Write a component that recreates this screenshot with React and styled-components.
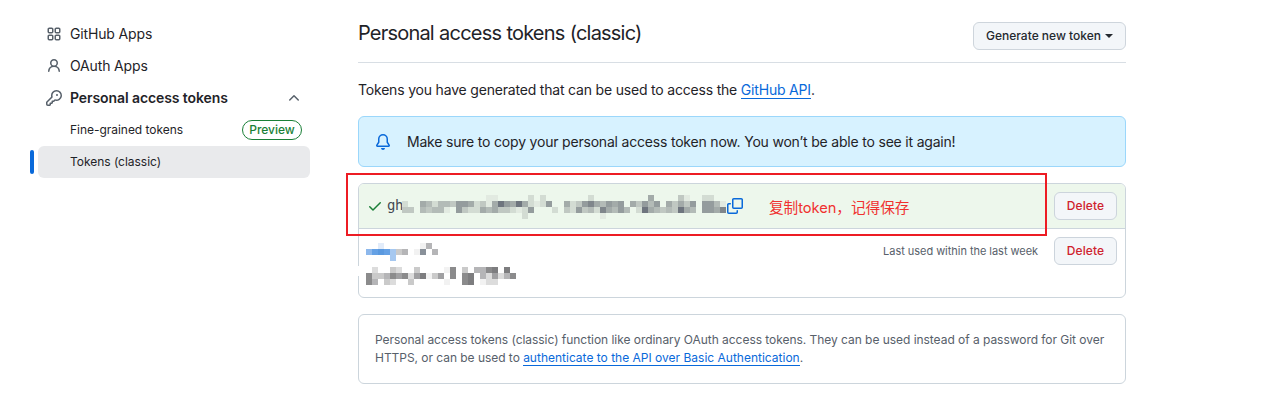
import React from "react";
import styled, { createGlobalStyle } from "styled-components";

const GlobalStyle = createGlobalStyle`
  * { box-sizing: border-box; }
  body {
    margin: 0;
    background: #fff;
    color: #1f2328;
    font-family: Inter, "Noto Sans CJK SC", sans-serif;
    font-size: 14px;
    line-height: 20px;
  }
`;

const Page = styled.div`
  display: flex;
  width: 1274px;
  height: 419px;
  overflow: hidden;
`;

const Sidebar = styled.nav`
  width: 310px;
  padding: 18px 0 0 38px;
  flex: none;
`;

const NavItem = styled.a`
  position: relative;
  display: flex;
  align-items: center;
  height: 32px;
  padding: 0 8px;
  border-radius: 6px;
  gap: 8px;
  white-space: nowrap;
  font-weight: ${(p) => (p.$bold ? 600 : 400)};
  letter-spacing: ${(p) => (p.$bold ? "-0.09px" : "-0.15px")};
`;

const SubItem = styled(NavItem)`
  padding-left: 32px;
  font-size: 12px;
  letter-spacing: -0.03px;
  background: ${(p) => (p.$active ? "#e9eaec" : "transparent")};

  &::before {
    content: "";
    display: ${(p) => (p.$active ? "block" : "none")};
    position: absolute;
    left: -8px;
    top: 4px;
    width: 4px;
    height: 24px;
    border-radius: 6px;
    background: #0969da;
  }
`;

const PreviewLabel = styled.span`
  margin-left: auto;
  width: 60px;
  height: 20px;
  border: 1px solid #1a7f37;
  border-radius: 20px;
  color: #1a7f37;
  font-size: 12px;
  font-weight: 500;
  line-height: 18px;
  text-align: center;
`;

const Glyph = styled.svg`
  display: block;
  flex: none;
  width: 16px;
  height: 16px;
  fill: ${(p) => p.$color || "#57606a"};
  margin-left: ${(p) => (p.$end ? "auto" : "0")};
`;

const Main = styled.main`
  width: 768px;
  margin-left: 48px;
  padding-top: 22px;
`;

const Header = styled.header`
  display: flex;
  justify-content: space-between;
  height: 41px;
  border-bottom: 1px solid #d8dee4;
`;

const Title = styled.h1`
  margin: 0;
  font-size: 20px;
  font-weight: 400;
  line-height: 22px;
  letter-spacing: -0.8px;
  word-spacing: 0.4px;
`;

const Button = styled.button`
  display: flex;
  align-items: center;
  justify-content: center;
  flex: none;
  width: ${(p) => (p.$wide ? "153px" : "63px")};
  height: 28px;
  padding: 0 0 ${(p) => (p.$danger ? "2px" : "1px")};
  gap: 4px;
  border: 1px solid ${(p) => (p.$danger ? "#ccd4dc" : "#ced5dc")};
  border-radius: 6px;
  background: #f3f6f9;
  color: ${(p) => (p.$danger ? "#cf222e" : "#24292f")};
  font: 500 12px Inter, sans-serif;
  letter-spacing: ${(p) => (p.$danger ? "0.1px" : "0")};
  white-space: nowrap;
`;

const Caret = styled.span`
  border: 4px solid transparent;
  border-top-color: currentColor;
  border-bottom: 0;
`;

const Intro = styled.p`
  margin: 17px 0 16px;
  letter-spacing: -0.19px;
  white-space: nowrap;
`;

const Link = styled.a`
  color: #0969da;
  border-bottom: 1px solid #0969da;
`;

const Flash = styled.div`
  display: flex;
  align-items: center;
  height: 51px;
  padding-left: 16px;
  gap: 16px;
  border: 1px solid #9bd7fb;
  border-radius: 6px;
  background: #d7f2ff;
  letter-spacing: -0.195px;
  white-space: nowrap;
`;

const TokenList = styled.section`
  position: relative;
  height: 115px;
  margin-top: 16px;
  border: 1px solid #ccd5dc;
  border-radius: 6px;
`;

const NewToken = styled.div`
  display: flex;
  align-items: center;
  height: 45px;
  padding: 0 8px;
  border-bottom: 1px solid #ccd5dc;
  border-radius: 5px 5px 0 0;
  background: #edf7ec;
`;

const TokenPrefix = styled.code`
  width: 16px;
  margin: 0 -1px 2px 4px;
  color: #424a53;
  font: 14px "DejaVu Sans Mono", monospace;
  letter-spacing: -0.4px;
`;

const Note = styled.span`
  margin: 4px auto 0 26px;
  color: #f0312f;
  font-size: 14.67px;
  letter-spacing: -0.05px;
  white-space: nowrap;
`;

const OldToken = styled.div`
  display: flex;
  align-items: flex-start;
  padding: 8px 8px 0 7px;
`;

const LastUsed = styled.span`
  margin: 5px 16px 0 auto;
  color: #57606a;
  font-size: 11px;
  line-height: 18px;
  letter-spacing: -0.04px;
  white-space: nowrap;
`;

const HighlightBox = styled.div`
  position: absolute;
  left: -13px;
  top: -11px;
  width: 701px;
  height: 63px;
  border: 2px solid #ed1c24;
`;

const ErasedEdge = styled.div`
  position: absolute;
  left: -2px;
  top: 82px;
  width: 3px;
  height: 10px;
  background: #fff;
`;

const Blank = styled.section`
  height: 70px;
  margin-top: 16px;
  padding: 16px 16px;
  border: 1px solid #ccd5dc;
  border-radius: 6px;
  color: #57606a;
  font-size: 12px;
  line-height: 18px;
  letter-spacing: -0.04px;
  white-space: nowrap;
`;

const BlankLink = styled(Link)`
  letter-spacing: 0;
`;

const MosaicSvg = styled.svg`
  display: block;
  flex: none;
`;

const ICONS = {
  apps: "M1.5 3.25c0-.966.784-1.75 1.75-1.75h2.5c.966 0 1.75.784 1.75 1.75v2.5A1.75 1.75 0 0 1 5.75 7.5h-2.5A1.75 1.75 0 0 1 1.5 5.75Zm7 0c0-.966.784-1.75 1.75-1.75h2.5c.966 0 1.75.784 1.75 1.75v2.5a1.75 1.75 0 0 1-1.75 1.75h-2.5A1.75 1.75 0 0 1 8.5 5.75Zm-7 7c0-.966.784-1.75 1.75-1.75h2.5c.966 0 1.75.784 1.75 1.75v2.5a1.75 1.75 0 0 1-1.75 1.75h-2.5a1.75 1.75 0 0 1-1.75-1.75Zm7 0c0-.966.784-1.75 1.75-1.75h2.5c.966 0 1.75.784 1.75 1.75v2.5a1.75 1.75 0 0 1-1.75 1.75h-2.5a1.75 1.75 0 0 1-1.75-1.75ZM3.25 3a.25.25 0 0 0-.25.25v2.5c0 .138.112.25.25.25h2.5A.25.25 0 0 0 6 5.75v-2.5A.25.25 0 0 0 5.75 3Zm7 0a.25.25 0 0 0-.25.25v2.5c0 .138.112.25.25.25h2.5a.25.25 0 0 0 .25-.25v-2.5a.25.25 0 0 0-.25-.25Zm-7 7a.25.25 0 0 0-.25.25v2.5c0 .138.112.25.25.25h2.5a.25.25 0 0 0 .25-.25v-2.5a.25.25 0 0 0-.25-.25Zm7 0a.25.25 0 0 0-.25.25v2.5c0 .138.112.25.25.25h2.5a.25.25 0 0 0 .25-.25v-2.5a.25.25 0 0 0-.25-.25Z",
  person: "M10.561 8.073a6.005 6.005 0 0 1 3.432 5.142.75.75 0 1 1-1.498.07 4.5 4.5 0 0 0-8.99 0 .75.75 0 0 1-1.498-.07 6.004 6.004 0 0 1 3.431-5.142 3.999 3.999 0 1 1 5.123 0ZM10.5 5a2.5 2.5 0 1 0-5 0 2.5 2.5 0 0 0 5 0Z",
  key: "M10.5 0a5.499 5.499 0 1 1-1.288 10.848l-.932.932a.749.749 0 0 1-.53.22H7v.75a.749.749 0 0 1-.22.53l-.5.5a.749.749 0 0 1-.53.22H5v.75a.749.749 0 0 1-.22.53l-.5.5a.749.749 0 0 1-.53.22h-2A1.75 1.75 0 0 1 0 14.25v-2c0-.199.079-.389.22-.53l4.932-4.932A5.5 5.5 0 0 1 10.5 0Zm-4 5.5c-.001.431.069.86.205 1.269a.75.75 0 0 1-.181.768L1.5 12.56v1.69c0 .138.112.25.25.25h1.69l.06-.06v-1.19a.75.75 0 0 1 .75-.75h1.19l.06-.06v-1.19a.75.75 0 0 1 .75-.75h1.19l1.023-1.025a.75.75 0 0 1 .768-.18A4 4 0 1 0 6.5 5.5ZM11 6a1 1 0 1 1 0-2 1 1 0 0 1 0 2Z",
  chevronUp: "M3.22 10.53a.749.749 0 0 1 0-1.06l4.25-4.25a.749.749 0 0 1 1.06 0l4.25 4.25a.749.749 0 1 1-1.06 1.06L8 6.811 4.28 10.53a.749.749 0 0 1-1.06 0Z",
  check: "M13.78 4.22a.75.75 0 0 1 0 1.06l-7.25 7.25a.75.75 0 0 1-1.06 0L2.22 9.28a.751.751 0 0 1 .018-1.042.751.751 0 0 1 1.042-.018L6 10.94l6.72-6.72a.75.75 0 0 1 1.06 0Z",
  bell: "M8 16a2 2 0 0 0 1.985-1.75c.017-.137-.097-.25-.235-.25h-3.5c-.138 0-.252.113-.235.25A2 2 0 0 0 8 16ZM3 5a5 5 0 0 1 10 0v2.947c0 .05.015.098.042.139l1.703 2.555A1.519 1.519 0 0 1 13.482 13H2.518a1.516 1.516 0 0 1-1.263-2.36l1.703-2.554A.255.255 0 0 0 3 7.947Zm5-3.5A3.5 3.5 0 0 0 4.5 5v2.947c0 .346-.102.683-.294.97l-1.703 2.556a.017.017 0 0 0-.003.01l.001.006c0 .002.002.004.004.006l.006.004.007.001h10.964l.007-.001.006-.004.004-.006.001-.007a.017.017 0 0 0-.003-.01l-1.703-2.554a1.745 1.745 0 0 1-.294-.97V5A3.5 3.5 0 0 0 8 1.5Z",
  copy: "M0 6.75C0 5.784.784 5 1.75 5h1.5a.75.75 0 0 1 0 1.5h-1.5a.25.25 0 0 0-.25.25v7.5c0 .138.112.25.25.25h7.5a.25.25 0 0 0 .25-.25v-1.5a.75.75 0 0 1 1.5 0v1.5A1.75 1.75 0 0 1 9.25 16h-7.5A1.75 1.75 0 0 1 0 14.25ZM5 1.75C5 .784 5.784 0 6.75 0h7.5C15.216 0 16 .784 16 1.75v7.5A1.75 1.75 0 0 1 14.25 11h-7.5A1.75 1.75 0 0 1 5 9.25Zm1.75-.25a.25.25 0 0 0-.25.25v7.5c0 .138.112.25.25.25h7.5a.25.25 0 0 0 .25-.25v-7.5a.25.25 0 0 0-.25-.25Z",
};

const Icon = ({ name, color, end }) => (
  <Glyph viewBox="0 0 16 16" $color={color} $end={end} aria-hidden="true">
    <path d={ICONS[name]} />
  </Glyph>
);

const GREEN_TONES = {
  a: "#e2eae1", b: "#d3dcd3", c: "#c0c8c2", d: "#b3bbb7",
  e: "#a3aba9", f: "#949c9d", g: "#7f868b", h: "#6e757e",
};
const GREY_TONES = {
  a: "#f2f2f2", b: "#dcdcdc", c: "#cacaca", d: "#b5b5b7",
  e: "#a0a0a2", f: "#8b8b8c", g: "#7d7d7f",
  p: "#e2ecfa", q: "#8db8ec", r: "#65a1e5", s: "#5a99df", t: "#a6c8f0", u: "#899099",
};

// Each character is one 6px cell of a pixelated, concealed value.
const NEW_SECRET = [
  "..............aa.....b.b.......b.........e....ca..bb..",
  "b..edbddcffebcaehfehebabf..ebcfgedfef.ecfdf.ececf.ffda",
  "cc.dcdda.fcbbedeccbabf...b.cbfcdbgedfd.bhedcdched.ffeg",
  "....................b............a....................",
];
const OLD_NAME = ["..p......ad.", "qrsrtcd.au.d", "....t......."];
const OLD_SECRET = [
  ".b..cb..c....af.c.ddfg.g.",
  "fccdfefbegace.f.fg.dbebdf",
  "fd.cb..c.....a..fg.abb...",
];

const Mosaic = ({ rows, tones, width, height, top = 0 }) => (
  <MosaicSvg width={width} height={height} shapeRendering="crispEdges" aria-hidden="true">
    {rows.flatMap((row, y) =>
      [...row].map((c, x) =>
        tones[c] ? <rect key={`${x}-${y}`} x={x * 6} y={top + y * 6} width="6" height="6" fill={tones[c]} /> : null
      )
    )}
  </MosaicSvg>
);

export default function App() {
  return (
    <>
      <GlobalStyle />
      <Page>
        <Sidebar>
          <NavItem><Icon name="apps" />GitHub Apps</NavItem>
          <NavItem><Icon name="person" />OAuth Apps</NavItem>
          <NavItem $bold><Icon name="key" />Personal access tokens<Icon name="chevronUp" end /></NavItem>
          <SubItem>Fine-grained tokens<PreviewLabel>Preview</PreviewLabel></SubItem>
          <SubItem $active>Tokens (classic)</SubItem>
        </Sidebar>
        <Main>
          <Header>
            <Title>Personal access tokens (classic)</Title>
            <Button $wide>Generate new token<Caret /></Button>
          </Header>
          <Intro>Tokens you have generated that can be used to access the <Link>GitHub API</Link>.</Intro>
          <Flash><Icon name="bell" color="#0969da" />Make sure to copy your personal access token now. You won’t be able to see it again!</Flash>
          <TokenList>
            <NewToken>
              <Icon name="check" color="#1a7f37" />
              <TokenPrefix>gh</TokenPrefix>
              <Mosaic rows={NEW_SECRET} tones={GREEN_TONES} width={325} height={26} top={2} />
              <Icon name="copy" color="#0969da" />
              <Note>复制token，记得保存</Note>
              <Button $danger>Delete</Button>
            </NewToken>
            <OldToken>
              <div>
                <Mosaic rows={OLD_NAME} tones={GREY_TONES} width={160} height={24} top={6} />
                <Mosaic rows={OLD_SECRET} tones={GREY_TONES} width={160} height={24} top={6} />
              </div>
              <LastUsed>Last used within the last week</LastUsed>
              <Button $danger>Delete</Button>
            </OldToken>
            <ErasedEdge />
            <HighlightBox />
          </TokenList>
          <Blank>
            Personal access tokens (classic) function like ordinary OAuth access tokens. They can be used instead of a password for Git over<br />
            HTTPS, or can be used to <BlankLink>authenticate to the API over Basic Authentication</BlankLink>.
          </Blank>
        </Main>
      </Page>
    </>
  );
}
